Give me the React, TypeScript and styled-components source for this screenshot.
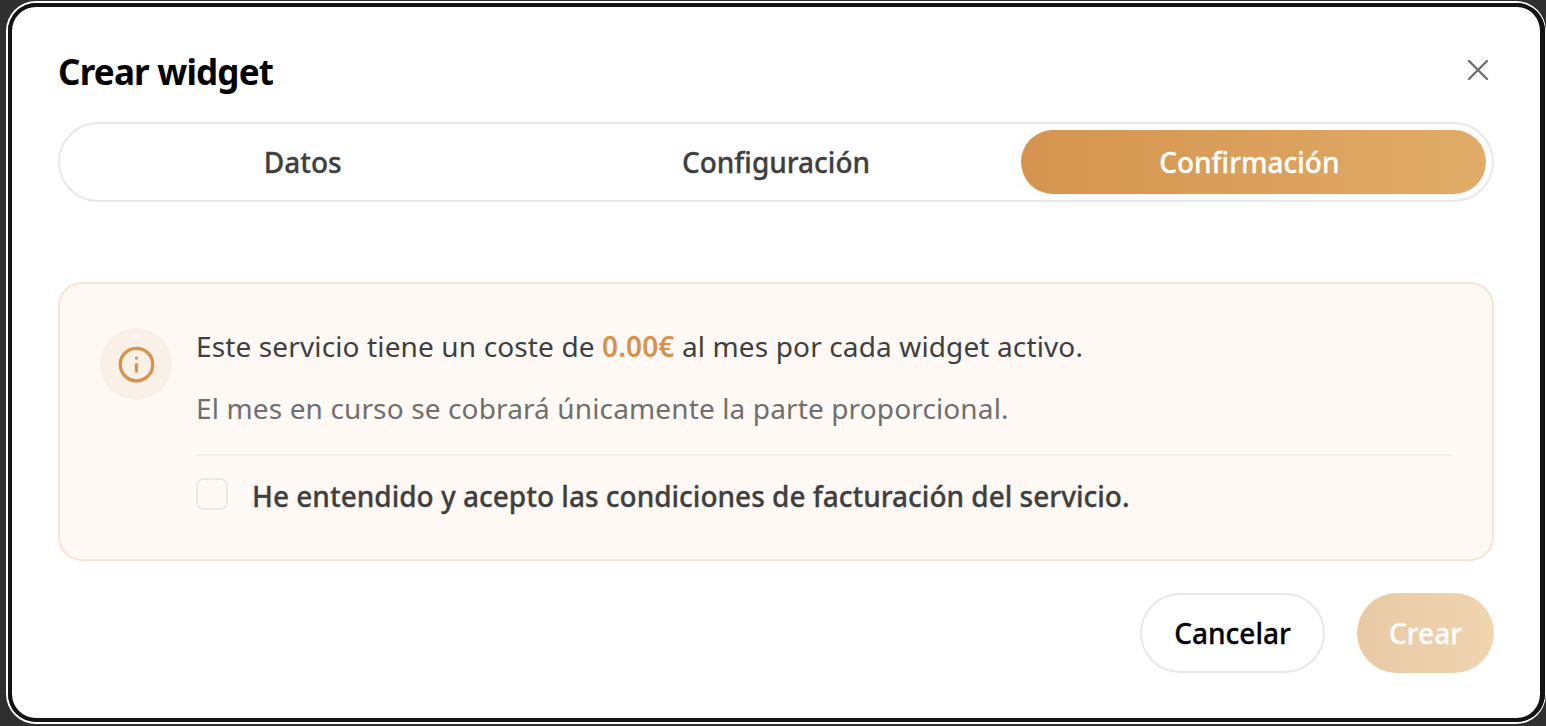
import { createGlobalStyle, styled } from "styled-components";
import { Info, X } from "lucide-react";

const GlobalStyle = createGlobalStyle`
  html, body {
    margin: 0;
    height: 100%;
    background: #2f2f2f;
    font-family: "Noto Sans", "Liberation Sans", sans-serif;
  }
  * { box-sizing: border-box; }
`;

const Screen = styled.div`
  width: 1546px;
  height: 726px;
  padding: 1px 0 2px 6px;
  overflow: hidden;
`;

const Frame = styled.div`
  height: 100%;
  border: 2px solid #fff;
  border-right-width: 1px;
  border-radius: 30px;
`;

const Modal = styled.section`
  height: 100%;
  background: #fff;
  border: 4px solid #131313;
  border-right-width: 5px;
  border-radius: 28px;
  padding: 34px 46px 0 46px;
  display: flex;
  flex-direction: column;
`;

const Header = styled.header`
  display: flex;
  justify-content: space-between;
  align-items: center;
  height: 60px;
`;

const Title = styled.h2`
  margin: 0;
  padding-top: 2px;
  font-size: 35px;
  line-height: 60px;
  font-weight: 700;
  letter-spacing: -0.8px;
  color: #000;
`;

const CloseButton = styled.button`
  display: flex;
  margin: -2px -2px 0 0;
  padding: 0;
  border: 0;
  background: none;
  color: #6e6e6e;
`;

const Tabs = styled.nav`
  margin-top: 21px;
  height: 80px;
  border: 2px solid #e8e8e8;
  border-radius: 40px;
  padding: 6px 6px 6px;
  display: grid;
  grid-template-columns: repeat(3, 1fr);
`;

const Tab = styled.div<{ $active?: boolean }>`
  position: relative;
  display: flex;
  align-items: center;
  justify-content: center;
  font-size: 28px;
  font-weight: 500;
  -webkit-text-stroke: 0.3px currentColor;
  color: ${(p) => (p.$active ? "#fff" : "#3f3f3f")};

  &::before {
    content: "";
    display: ${(p) => (p.$active ? "block" : "none")};
    position: absolute;
    inset: 0 0 0 8px;
    border-radius: 32px;
    background: linear-gradient(90deg, #d4944f, #e0ac68);
    box-shadow: -8px 0 0 0 #fff, -8px 0 5px 0 rgba(0, 0, 0, 0.05);
  }
`;

const TabLabel = styled.span`
  position: relative;
`;

const Panel = styled.div`
  margin-top: 80px;
  height: 279px;
  background: #fef9f5;
  border: 2px solid #f5e5d3;
  border-radius: 24px;
  padding: 44px 40px 0;
  display: flex;
  gap: 24px;
`;

const IconCircle = styled.div`
  flex: none;
  width: 72px;
  height: 72px;
  border-radius: 50%;
  background: #f9f0e7;
  color: #d8924a;
  display: flex;
  align-items: center;
  justify-content: center;
`;

const PanelBody = styled.div`
  flex: 1;
  min-width: 0;
  margin-top: -1px;
`;

const Lead = styled.p`
  margin: 0;
  font-size: 28px;
  line-height: 38px;
  letter-spacing: 0.13px;
  color: #3f3f3f;
`;

const Price = styled.strong`
  color: #d8924a;
  font-weight: 600;
`;

const Note = styled.p`
  margin: 24px 0 0;
  font-size: 28px;
  line-height: 38px;
  letter-spacing: 0.13px;
  color: #6f6f6f;
`;

const Divider = styled.hr`
  margin: 27px 0 0;
  height: 2px;
  border: 0;
  background: #f8eee3;
`;

const Accept = styled.label`
  margin-top: 21px;
  display: flex;
  align-items: center;
  gap: 24px;
  font-size: 28px;
  line-height: 38px;
  font-weight: 500;
  -webkit-text-stroke: 0.3px currentColor;
  color: #3f3f3f;
`;

const CheckBox = styled.span`
  flex: none;
  width: 32px;
  height: 32px;
  margin-top: -4px;
  border: 2px solid #ebe9e6;
  border-radius: 8px;
`;

const Footer = styled.footer`
  margin-top: 32px;
  display: flex;
  justify-content: flex-end;
  gap: 32px;
`;

const OutlineButton = styled.button`
  width: 185px;
  height: 80px;
  border: 2px solid #e8e8e8;
  border-radius: 40px;
  background: #fff;
  font: 500 28px "Noto Sans", sans-serif;
  -webkit-text-stroke: 0.3px currentColor;
  color: #000;
`;

const PrimaryButton = styled.button`
  width: 137px;
  height: 80px;
  border: 0;
  border-radius: 40px;
  background: linear-gradient(90deg, #e9c9a5, #efd5b0);
  font: 500 28px "Noto Sans", sans-serif;
  -webkit-text-stroke: 0.3px currentColor;
  color: #fff;
`;

export default function App() {
  return (
    <Screen>
      <GlobalStyle />
      <Frame>
        <Modal>
          <Header>
            <Title>Crear widget</Title>
            <CloseButton aria-label="Cerrar">
              <X size={36} strokeWidth={1.6} />
            </CloseButton>
          </Header>
          <Tabs>
            <Tab><TabLabel>Datos</TabLabel></Tab>
            <Tab><TabLabel>Configuración</TabLabel></Tab>
            <Tab $active><TabLabel>Confirmación</TabLabel></Tab>
          </Tabs>
          <Panel>
            <IconCircle>
              <Info size={39} strokeWidth={2} />
            </IconCircle>
            <PanelBody>
              <Lead>
                Este servicio tiene un coste de <Price>0.00€</Price> al mes por cada widget activo.
              </Lead>
              <Note>El mes en curso se cobrará únicamente la parte proporcional.</Note>
              <Divider />
              <Accept>
                <CheckBox />
                He entendido y acepto las condiciones de facturación del servicio.
              </Accept>
            </PanelBody>
          </Panel>
          <Footer>
            <OutlineButton>Cancelar</OutlineButton>
            <PrimaryButton>Crear</PrimaryButton>
          </Footer>
        </Modal>
      </Frame>
    </Screen>
  );
}
